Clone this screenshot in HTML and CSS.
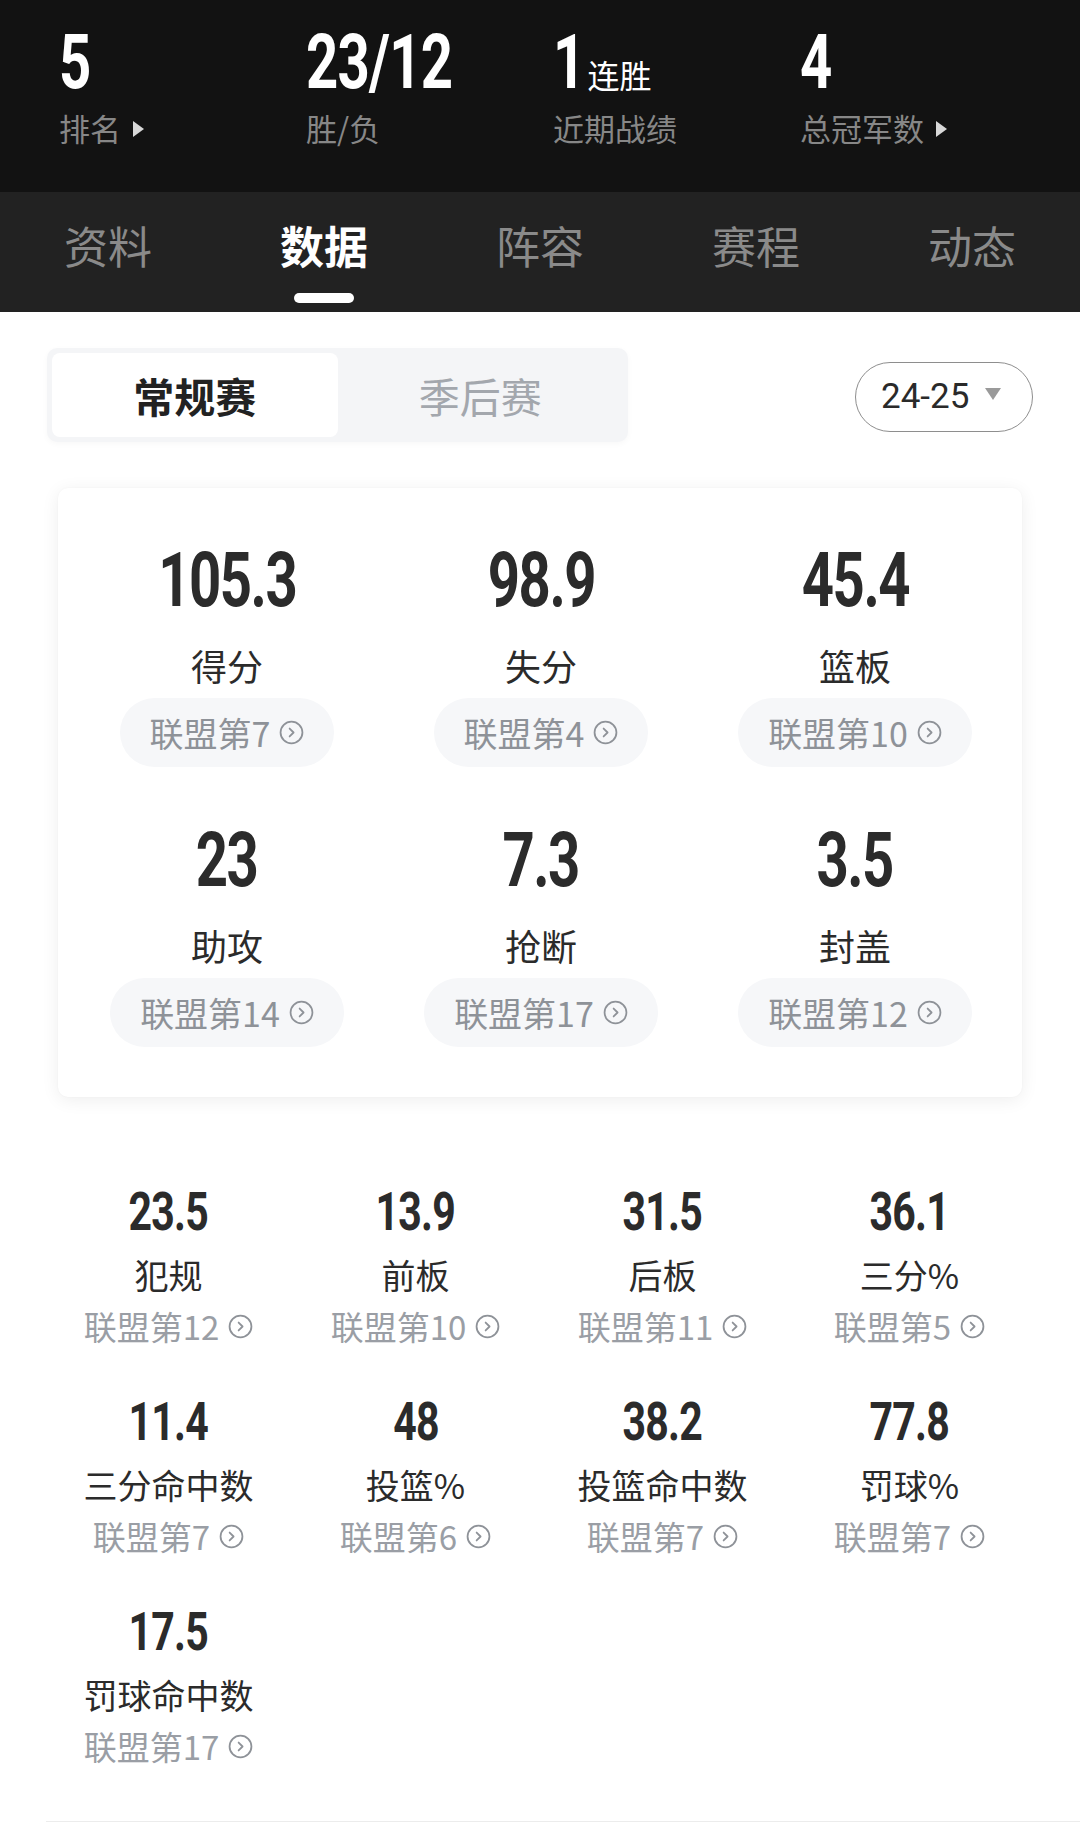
FILE: index.html
```html
<!DOCTYPE html>
<html lang="zh-CN">
<head>
<meta charset="utf-8">
<title>球队数据</title>
<link rel="stylesheet" href="styles.css">
</head>
<body>
<header class="team-head">
  <div class="head-stat">
    <div class="head-num"><span class="hn">5</span></div>
    <div class="head-label">排名<span class="tri"></span></div>
  </div>
  <div class="head-stat">
    <div class="head-num"><span class="hn">23/12</span></div>
    <div class="head-label">胜/负</div>
  </div>
  <div class="head-stat">
    <div class="head-num"><span class="hn">1</span><span class="head-unit">连胜</span></div>
    <div class="head-label">近期战绩</div>
  </div>
  <div class="head-stat">
    <div class="head-num"><span class="hn">4</span></div>
    <div class="head-label">总冠军数<span class="tri"></span></div>
  </div>
</header>

<nav class="tabs">
  <div class="tab">资料</div>
  <div class="tab active">数据<span class="tab-bar"></span></div>
  <div class="tab">阵容</div>
  <div class="tab">赛程</div>
  <div class="tab">动态</div>
</nav>

<section class="filters">
  <div class="segment">
    <div class="seg active">常规赛</div>
    <div class="seg">季后赛</div>
  </div>
  <div class="season">24-25<span class="caret"></span></div>
</section>

<section class="card">
  <div class="cell">
    <div class="big-num">105.3</div>
    <div class="big-label">得分</div>
    <div class="pill">联盟第7<svg class="go" viewBox="0 0 24 24"><circle cx="12" cy="12" r="10.5"/><path d="M10.2 8.2 L14 12 L10.2 15.8"/></svg></div>
  </div>
  <div class="cell">
    <div class="big-num">98.9</div>
    <div class="big-label">失分</div>
    <div class="pill">联盟第4<svg class="go" viewBox="0 0 24 24"><circle cx="12" cy="12" r="10.5"/><path d="M10.2 8.2 L14 12 L10.2 15.8"/></svg></div>
  </div>
  <div class="cell">
    <div class="big-num">45.4</div>
    <div class="big-label">篮板</div>
    <div class="pill">联盟第10<svg class="go" viewBox="0 0 24 24"><circle cx="12" cy="12" r="10.5"/><path d="M10.2 8.2 L14 12 L10.2 15.8"/></svg></div>
  </div>
  <div class="cell">
    <div class="big-num">23</div>
    <div class="big-label">助攻</div>
    <div class="pill">联盟第14<svg class="go" viewBox="0 0 24 24"><circle cx="12" cy="12" r="10.5"/><path d="M10.2 8.2 L14 12 L10.2 15.8"/></svg></div>
  </div>
  <div class="cell">
    <div class="big-num">7.3</div>
    <div class="big-label">抢断</div>
    <div class="pill">联盟第17<svg class="go" viewBox="0 0 24 24"><circle cx="12" cy="12" r="10.5"/><path d="M10.2 8.2 L14 12 L10.2 15.8"/></svg></div>
  </div>
  <div class="cell">
    <div class="big-num">3.5</div>
    <div class="big-label">封盖</div>
    <div class="pill">联盟第12<svg class="go" viewBox="0 0 24 24"><circle cx="12" cy="12" r="10.5"/><path d="M10.2 8.2 L14 12 L10.2 15.8"/></svg></div>
  </div>
</section>

<section class="grid">
  <div class="item"><div class="num">23.5</div><div class="label">犯规</div><div class="rank">联盟第12<svg class="go sm" viewBox="0 0 24 24"><circle cx="12" cy="12" r="10.5"/><path d="M10.2 8.2 L14 12 L10.2 15.8"/></svg></div></div>
  <div class="item"><div class="num">13.9</div><div class="label">前板</div><div class="rank">联盟第10<svg class="go sm" viewBox="0 0 24 24"><circle cx="12" cy="12" r="10.5"/><path d="M10.2 8.2 L14 12 L10.2 15.8"/></svg></div></div>
  <div class="item"><div class="num">31.5</div><div class="label">后板</div><div class="rank">联盟第11<svg class="go sm" viewBox="0 0 24 24"><circle cx="12" cy="12" r="10.5"/><path d="M10.2 8.2 L14 12 L10.2 15.8"/></svg></div></div>
  <div class="item"><div class="num">36.1</div><div class="label">三分%</div><div class="rank">联盟第5<svg class="go sm" viewBox="0 0 24 24"><circle cx="12" cy="12" r="10.5"/><path d="M10.2 8.2 L14 12 L10.2 15.8"/></svg></div></div>
  <div class="item"><div class="num">11.4</div><div class="label">三分命中数</div><div class="rank">联盟第7<svg class="go sm" viewBox="0 0 24 24"><circle cx="12" cy="12" r="10.5"/><path d="M10.2 8.2 L14 12 L10.2 15.8"/></svg></div></div>
  <div class="item"><div class="num">48</div><div class="label">投篮%</div><div class="rank">联盟第6<svg class="go sm" viewBox="0 0 24 24"><circle cx="12" cy="12" r="10.5"/><path d="M10.2 8.2 L14 12 L10.2 15.8"/></svg></div></div>
  <div class="item"><div class="num">38.2</div><div class="label">投篮命中数</div><div class="rank">联盟第7<svg class="go sm" viewBox="0 0 24 24"><circle cx="12" cy="12" r="10.5"/><path d="M10.2 8.2 L14 12 L10.2 15.8"/></svg></div></div>
  <div class="item"><div class="num">77.8</div><div class="label">罚球%</div><div class="rank">联盟第7<svg class="go sm" viewBox="0 0 24 24"><circle cx="12" cy="12" r="10.5"/><path d="M10.2 8.2 L14 12 L10.2 15.8"/></svg></div></div>
  <div class="item"><div class="num">17.5</div><div class="label">罚球命中数</div><div class="rank">联盟第17<svg class="go sm" viewBox="0 0 24 24"><circle cx="12" cy="12" r="10.5"/><path d="M10.2 8.2 L14 12 L10.2 15.8"/></svg></div></div>
</section>

<div class="bottom-line"></div>
</body>
</html>
```

FILE: styles.css
```css
* { box-sizing: border-box; }

html, body {
  margin: 0;
  padding: 0;
  background: #ffffff;
}

body {
  width: 1080px;
  font-family: "Noto Sans CJK SC", "Noto Sans", sans-serif;
  color: #222222;
  overflow: hidden;
}

/* ---------- header ---------- */
.team-head {
  height: 192px;
  background: #121212;
  display: grid;
  grid-template-columns: repeat(4, 247px);
  padding: 25px 0 0 59px;
}

.head-num {
  display: flex;
  align-items: baseline;
  height: 75px;
  line-height: 75px;
  white-space: nowrap;
}

.hn {
  display: inline-block;
  font-family: Roboto, "Liberation Sans", sans-serif;
  font-weight: 700;
  font-size: 76px;
  line-height: 75px;
  color: #ffffff;
  letter-spacing: -1px;
  transform: scaleX(0.74);
  transform-origin: left center;
}

.head-unit {
  font-weight: 400;
  font-size: 32px;
  color: #ffffff;
  margin-left: -8px;
}

.head-label {
  margin-top: 12px;
  font-size: 31px;
  line-height: 31px;
  color: #878787;
  display: flex;
  align-items: center;
  white-space: nowrap;
}

.tri {
  display: inline-block;
  width: 0;
  height: 0;
  margin-left: 12px;
  margin-top: 2px;
  border-top: 8px solid transparent;
  border-bottom: 8px solid transparent;
  border-left: 11px solid #d8d8d8;
}

/* ---------- tabs ---------- */
.tabs {
  height: 120px;
  background: #222222;
  display: grid;
  grid-template-columns: repeat(5, 1fr);
}

.tab {
  display: flex;
  flex-direction: column;
  align-items: center;
  padding-top: 31px;
  font-size: 44px;
  line-height: 44px;
  color: #8a8a8a;
}

.tab.active {
  color: #ffffff;
  font-weight: 700;
}

.tab-bar {
  display: block;
  width: 60px;
  height: 10px;
  margin-top: 26px;
  border-radius: 5px;
  background: #ffffff;
}

/* ---------- filters ---------- */
.filters {
  display: flex;
  justify-content: space-between;
  align-items: center;
  padding: 36px 47px 0 47px;
}

.segment {
  width: 581px;
  height: 94px;
  padding: 5px;
  border-radius: 10px;
  background: #f4f5f7;
  box-shadow: 0 2px 6px rgba(0, 0, 0, 0.03);
  display: flex;
}

.seg {
  flex: 1;
  display: flex;
  align-items: center;
  justify-content: center;
  font-size: 41px;
  color: #a3a7ad;
  border-radius: 8px;
}

.seg.active {
  background: #ffffff;
  color: #222222;
  font-weight: 700;
}

.season {
  width: 178px;
  height: 70px;
  margin-top: 3px;
  border: 1.5px solid #8e8e8e;
  border-radius: 35px;
  display: flex;
  align-items: center;
  padding-left: 25px;
  font-family: Roboto, "Liberation Sans", sans-serif;
  font-size: 35px;
  color: #2a2a2a;
}

.caret {
  margin-left: 16px;
  width: 0;
  height: 0;
  border-left: 8px solid transparent;
  border-right: 8px solid transparent;
  border-top: 12px solid #9a9a9a;
  margin-top: -6px;
}

/* ---------- card ---------- */
.card {
  margin: 46px 58px 0 58px;
  padding: 55px 10px 50px 12px;
  border-radius: 10px;
  background: #ffffff;
  box-shadow: 0 3px 18px rgba(0, 0, 0, 0.07), 0 0 2px rgba(0, 0, 0, 0.04);
  display: grid;
  grid-template-columns: repeat(3, 1fr);
  row-gap: 56px;
}

.cell {
  display: flex;
  flex-direction: column;
  align-items: center;
}

.big-num {
  font-family: Roboto, "Liberation Sans", sans-serif;
  font-weight: 700;
  font-size: 76px;
  line-height: 75px;
  height: 75px;
  color: #2b2b2b;
  letter-spacing: -2px;
  transform: scaleX(0.74);
}

.big-label {
  margin-top: 29px;
  font-size: 36px;
  line-height: 36px;
  color: #2b2b2b;
}

.pill {
  margin-top: 15px;
  height: 69px;
  padding: 0 30px;
  border-radius: 35px;
  background: #f6f7f9;
  display: flex;
  align-items: center;
  font-size: 34px;
  color: #8e9298;
  white-space: nowrap;
}

.go {
  width: 25px;
  height: 25px;
  margin-left: 9px;
  fill: none;
  stroke: #8e9298;
  stroke-width: 1.7;
  stroke-linecap: round;
  stroke-linejoin: round;
}

.go.sm {
  width: 25px;
  height: 25px;
  margin-left: 9px;
}

/* ---------- grid ---------- */
.grid {
  margin-top: 88px;
  padding-left: 45px;
  display: grid;
  grid-template-columns: repeat(4, 247px);
  row-gap: 52px;
}

.item {
  display: flex;
  flex-direction: column;
  align-items: center;
}

.num {
  font-family: Roboto, "Liberation Sans", sans-serif;
  font-weight: 700;
  font-size: 54px;
  line-height: 53px;
  height: 53px;
  color: #2b2b2b;
  letter-spacing: -1px;
  transform: scaleX(0.76);
}

.label {
  margin-top: 20px;
  font-size: 34px;
  line-height: 34px;
  color: #2b2b2b;
  white-space: nowrap;
}

.rank {
  margin-top: 18px;
  font-size: 33px;
  line-height: 33px;
  color: #9a9ea5;
  display: flex;
  align-items: center;
  white-space: nowrap;
}

.bottom-line {
  margin: 58px 0 0 46px;
  height: 1px;
  background: #ececec;
}
```
